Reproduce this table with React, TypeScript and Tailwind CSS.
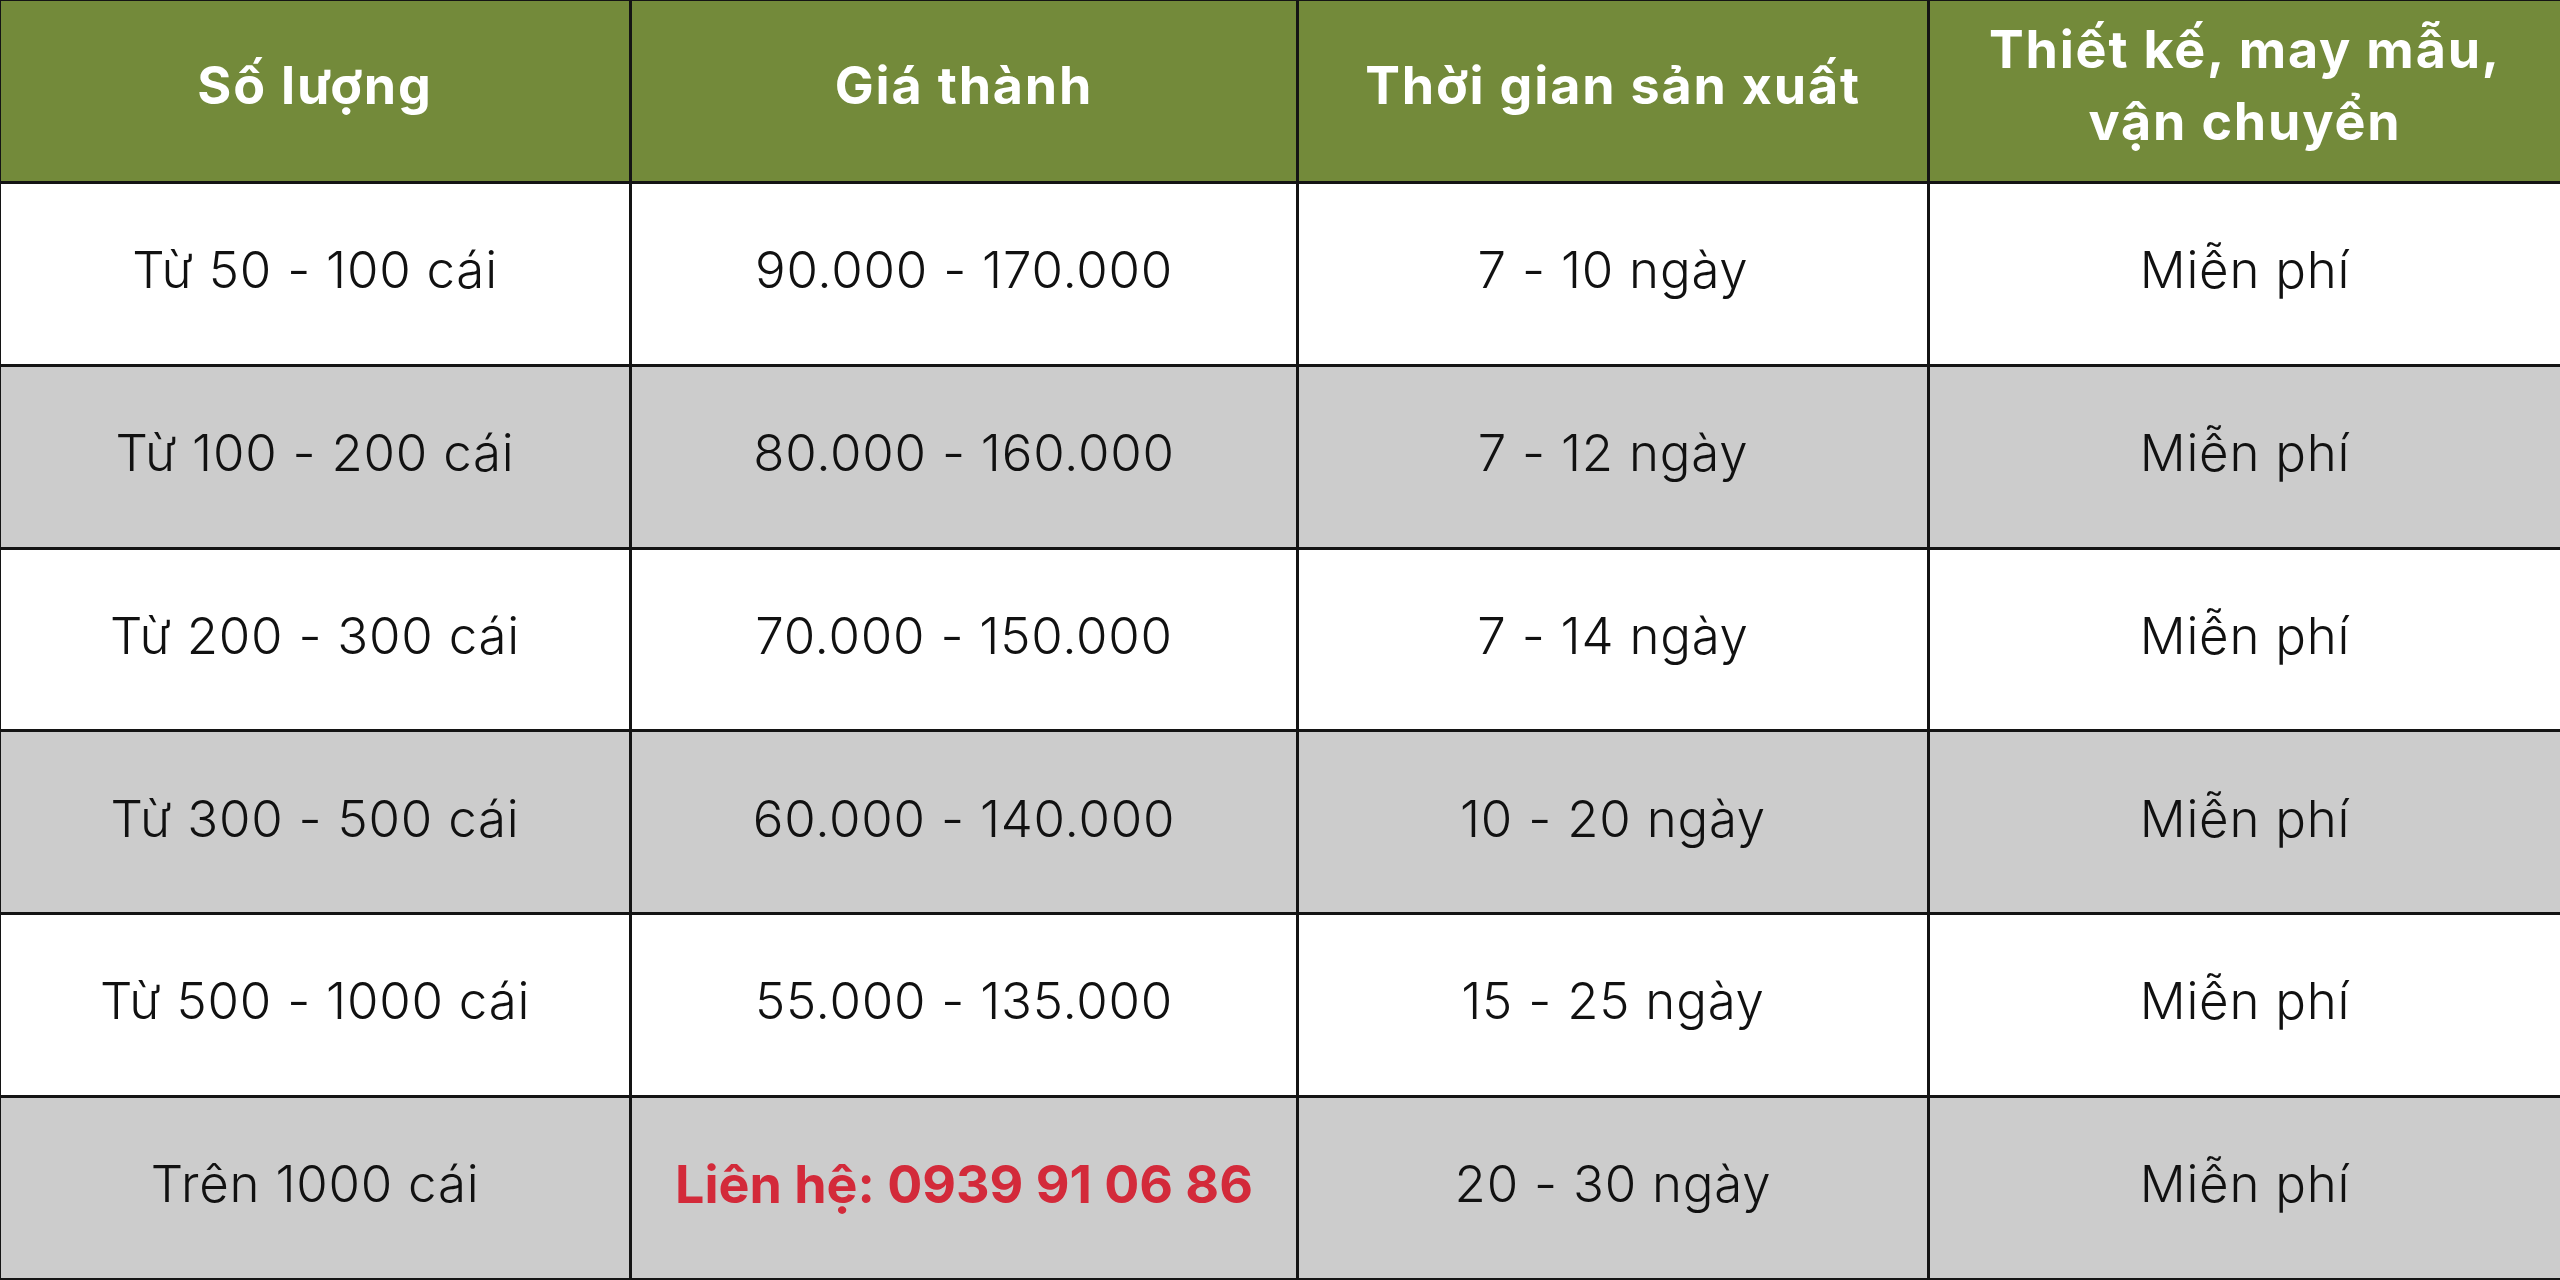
const headers = ["Số lượng", "Giá thành", "Thời gian sản xuất", "Thiết kế, may mẫu,\nvận chuyển"];

const rows = [
  ["Từ 50 - 100 cái", "90.000 - 170.000", "7 - 10 ngày", "Miễn phí"],
  ["Từ 100 - 200 cái", "80.000 - 160.000", "7 - 12 ngày", "Miễn phí"],
  ["Từ 200 - 300 cái", "70.000 - 150.000", "7 - 14 ngày", "Miễn phí"],
  ["Từ 300 - 500 cái", "60.000 - 140.000", "10 - 20 ngày", "Miễn phí"],
  ["Từ 500 - 1000 cái", "55.000 - 135.000", "15 - 25 ngày", "Miễn phí"],
  ["Trên 1000 cái", "Liên hệ: 0939 91 06 86", "20 - 30 ngày", "Miễn phí"],
];

export default function App() {
  return (
    <div
      className="grid h-[1280px] w-[2560px] grid-cols-[628px_664px_628px_1fr] grid-rows-7 gap-[3px] bg-[#141414] pl-[1px] pt-[1px] pb-[2px]"
      style={{ fontFamily: "Inter, 'Noto Sans', sans-serif" }}
    >
      {headers.map((h) => (
        <div
          key={h}
          className="flex items-center justify-center whitespace-pre-line bg-[#738a3a] pb-[9px] text-center text-[52px] font-bold leading-[72px] tracking-[0.035em] text-white"
        >
          {h}
        </div>
      ))}
      {rows.map((r, i) =>
        r.map((c, j) => {
          const contact = i === 5 && j === 1;
          return (
            <div
              key={`${i}-${j}`}
              className={`flex items-center justify-center pb-[7px] text-center ${
                i % 2 === 1 ? "bg-[#cccccc]" : "bg-white"
              } ${
                contact
                  ? "text-[52px] font-bold text-[#d32a3a]"
                  : "text-[51px] font-light tracking-[0.015em] text-[#111]"
              }`}
            >
              {c}
            </div>
          );
        })
      )}
    </div>
  );
}
